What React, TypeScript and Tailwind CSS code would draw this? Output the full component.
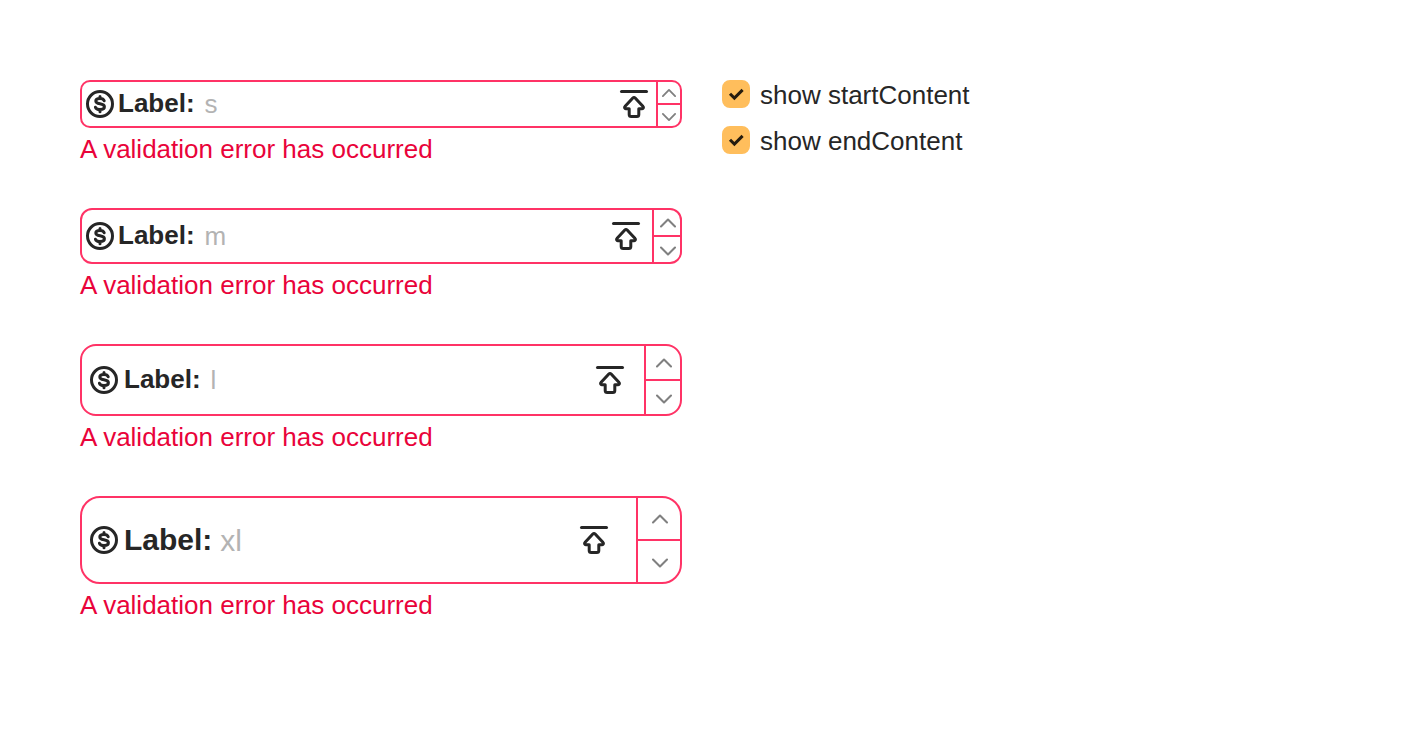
import { useState } from 'react';
import clsx from 'clsx';

type Size = 's' | 'm' | 'l' | 'xl';

interface SizeStyle {
  box: string;
  text: string;
  label: string;
  end: string;
  stepper: string;
  button: string;
  chevron: string;
}

const styles: Record<Size, SizeStyle> = {
  s: {
    box: 'h-12 rounded-[10px] pl-0.5',
    text: 'text-[26px]',
    label: 'pl-0.5 pr-2.5 pb-0.5',
    end: 'mr-1.5',
    stepper: 'w-6',
    button: '',
    chevron: 'size-7',
  },
  m: {
    box: 'h-14 rounded-xl pl-0.5',
    text: 'text-[26px]',
    label: 'pl-0.5 pr-2.5 pb-0.5',
    end: 'mr-2.5',
    stepper: 'w-7',
    button: 'pl-0.5',
    chevron: 'size-8',
  },
  l: {
    box: 'h-[72px] rounded-2xl pl-1.5',
    text: 'text-[26px]',
    label: 'pl-1 pr-2.5 pb-0.5',
    end: 'mr-[18px]',
    stepper: 'w-9',
    button: 'pl-0.5',
    chevron: 'size-8',
  },
  xl: {
    box: 'h-[88px] rounded-[20px] pl-1.5',
    text: 'text-[30px]',
    label: 'pl-1 pr-2',
    end: 'mr-[26px]',
    stepper: 'w-11',
    button: 'pl-0.5',
    chevron: 'size-8',
  },
};

function CircleDollar() {
  return (
    <svg className="size-8 shrink-0" viewBox="0 0 16 16" fill="none" stroke="currentColor" aria-hidden="true">
      <circle cx="8" cy="8" r="6.25" strokeWidth="1.5" />
      <path
        d="M8 4.2v1M8 10.9v1M10.1 6.4C9.85 5.65 9.1 5.2 8 5.2c-1.25 0-2.1.5-2.1 1.3 0 .85.8 1.2 2.1 1.4 1.5.25 2.2.7 2.2 1.5 0 .85-.9 1.4-2.2 1.4-1.2 0-2.05-.45-2.3-1.2"
        strokeWidth="1.5"
        strokeLinecap="round"
        strokeLinejoin="round"
      />
    </svg>
  );
}

function ArrowToTop() {
  return (
    <svg
      className="size-8"
      viewBox="0 0 16 16"
      fill="none"
      stroke="currentColor"
      strokeWidth="1.5"
      strokeLinecap="round"
      strokeLinejoin="round"
      aria-hidden="true"
    >
      <path d="M1.75 1.75h12.5" />
      <path d="M7.42 5.05a.76.76 0 0 1 1.16 0L12.55 9.3a.6.6 0 0 1-.43 1.02H10.4v2.93a1 1 0 0 1-1 1H6.6a1 1 0 0 1-1-1v-2.93H3.88a.6.6 0 0 1-.43-1.02Z" />
    </svg>
  );
}

function Chevron({ up, className }: { up?: boolean; className: string }) {
  return (
    <svg
      className={clsx('shrink-0', className)}
      viewBox="0 0 32 32"
      fill="none"
      stroke="currentColor"
      strokeWidth="2.1"
      strokeLinecap="round"
      strokeLinejoin="round"
      aria-hidden="true"
    >
      <path d={up ? 'M9 19.5l7-7 7 7' : 'M9 12.5l7 7 7-7'} />
    </svg>
  );
}

function NumberField({ size, start, end }: { size: Size; start: boolean; end: boolean }) {
  const [value, setValue] = useState('');
  const s = styles[size];
  const id = `number-${size}`;
  const step = (delta: number) => setValue(String((Number(value) || 0) + delta));
  return (
    <div>
      <div className={clsx('flex items-center overflow-hidden border-2 border-[#ff3366]', s.box)}>
        {start && <CircleDollar />}
        <label htmlFor={id} className={clsx('shrink-0 font-bold leading-9', s.text, s.label)}>
          Label:
        </label>
        <input
          id={id}
          inputMode="numeric"
          placeholder={size}
          value={value}
          onChange={(e) => setValue(e.target.value)}
          aria-invalid="true"
          aria-describedby={`${id}-error`}
          className={clsx('h-9 min-w-0 flex-1 bg-transparent outline-none placeholder:text-[#b3b3b3]', s.text)}
        />
        {end && (
          <span className={s.end}>
            <ArrowToTop />
          </span>
        )}
        <div className={clsx('flex shrink-0 flex-col self-stretch border-l-2 border-[#ff3366] text-[#808080]', s.stepper)}>
          <button
            type="button"
            aria-label="Increment"
            onClick={() => step(1)}
            className={clsx('flex min-h-0 flex-1 items-center justify-center overflow-hidden', s.button)}
          >
            <Chevron up className={s.chevron} />
          </button>
          <div className="h-0.5 shrink-0 bg-[#ff3366]" />
          <button
            type="button"
            aria-label="Decrement"
            onClick={() => step(-1)}
            className={clsx('flex min-h-0 flex-1 basis-0 items-center justify-center overflow-hidden', s.button)}
          >
            <span className="pt-0.5">
              <Chevron className={s.chevron} />
            </span>
          </button>
        </div>
      </div>
      <p id={`${id}-error`} className="mt-1 pb-0.5 text-[26px] leading-[34px] text-[#e9033a]">
        A validation error has occurred
      </p>
    </div>
  );
}

function Checkbox({ label, checked, onChange }: { label: string; checked: boolean; onChange: (v: boolean) => void }) {
  return (
    <label className="flex items-start gap-2.5 text-[26px] leading-[30px]">
      <span className="grid size-7 shrink-0">
        <input
          type="checkbox"
          checked={checked}
          onChange={(e) => onChange(e.target.checked)}
          className="col-start-1 row-start-1 size-7 appearance-none rounded-lg border-2 border-[#d9d9d9] checked:border-[#ffbe5c] checked:bg-[#ffbe5c]"
        />
        {checked && (
          <svg
            className="pointer-events-none col-start-1 row-start-1 size-7"
            viewBox="0 0 28 28"
            fill="none"
            stroke="#261c0e"
            strokeWidth="3"
            aria-hidden="true"
          >
            <path d="M8 13.7l4.4 4.4 8.2-8.2" />
          </svg>
        )}
      </span>
      <span>{label}</span>
    </label>
  );
}

export default function App() {
  const [start, setStart] = useState(true);
  const [end, setEnd] = useState(true);
  return (
    <main className="flex items-start gap-10 bg-white p-20 font-['Liberation_Sans',Arial,sans-serif] text-[#262626]">
      <section className="flex w-full max-w-[602px] flex-col gap-10">
        <NumberField size="s" start={start} end={end} />
        <NumberField size="m" start={start} end={end} />
        <NumberField size="l" start={start} end={end} />
        <NumberField size="xl" start={start} end={end} />
      </section>
      <section className="flex shrink-0 flex-col gap-4">
        <Checkbox label="show startContent" checked={start} onChange={setStart} />
        <Checkbox label="show endContent" checked={end} onChange={setEnd} />
      </section>
    </main>
  );
}
